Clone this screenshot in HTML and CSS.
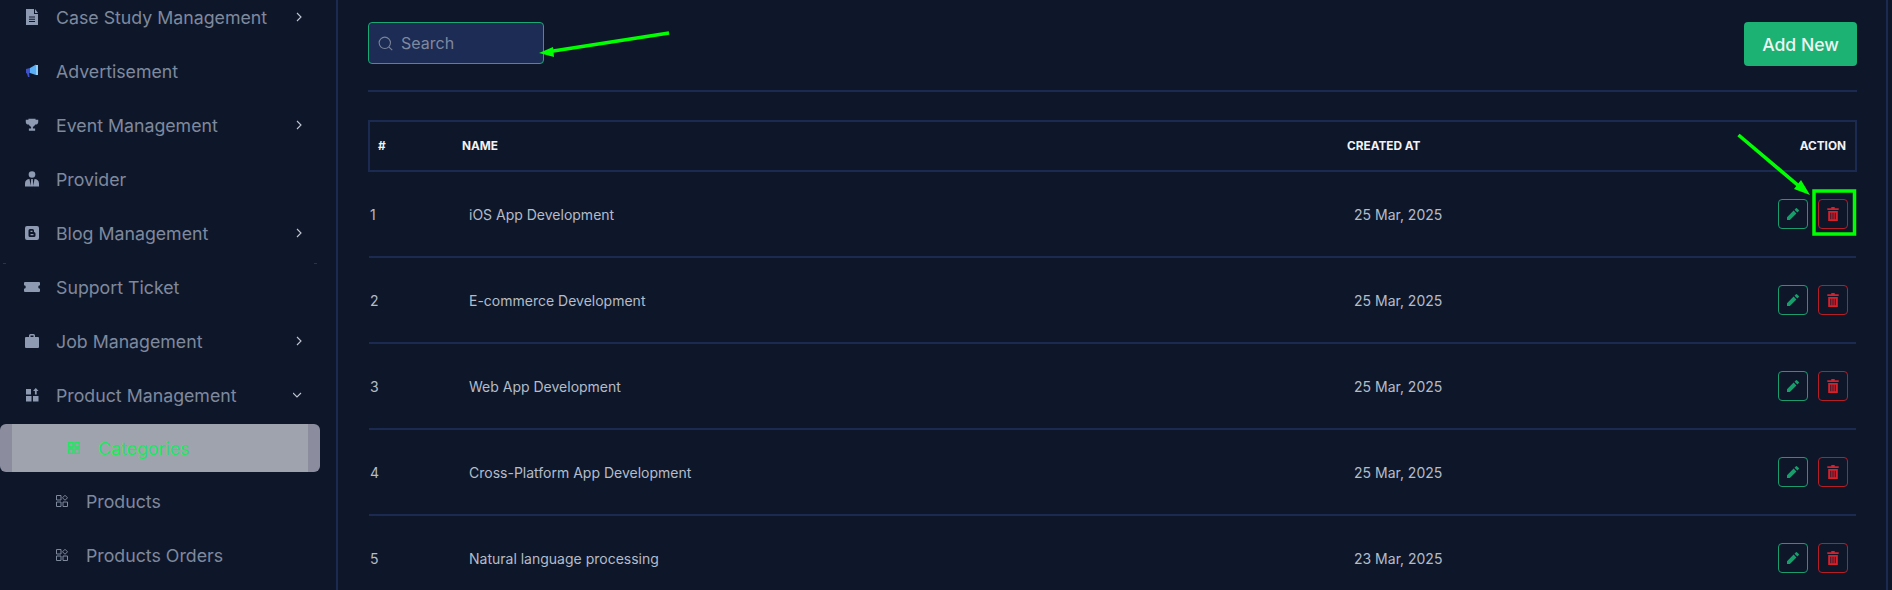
FILE: index.html
```html
<!DOCTYPE html>
<html lang="en">
<head>
<meta charset="utf-8">
<title>Categories</title>
<link rel="stylesheet" href="styles.css">
</head>
<body>
<div class="page">
  <aside class="sidebar">
    <ul class="nav">
      <li class="nav-item"><svg class="ico" viewBox="0 0 16 16"><path d="M2 0h8v5h4v11H2z M11 0l3 4h-3z M5 7.500v1h6v-1z M5 9.800v1h6v-1z M5 12v1h6v-1z" fill-rule="evenodd"/></svg><span class="label">Case Study Management</span><svg class="chev" viewBox="0 0 10 10"><path d="M4 1l4 4-4 4"/></svg></li>
      <li class="nav-item"><svg class="ico" viewBox="0 0 16 16"><path fill="#3f51c9" d="M2 6l4-1v5l-1 .2L5.500 14H4L3 10.500 2 10z"/><path fill="#5aaef5" d="M6 5l6-3.500V12L6 10z"/><path fill="#8fd0fb" d="M12 2h2v10h-2z"/></svg><span class="label">Advertisement</span></li>
      <li class="nav-item"><svg class="ico" viewBox="-1 -1 18 18"><path d="M4 1h8v1h3v2.500c0 1.800-1.300 2.900-3.300 3C11 9 10 9.700 9 9.900V12h2.500v2.500h-7V12H7V9.900C6 9.700 5 9 4.300 7.500 2.300 7.400 1 6.300 1 4.500V2h3z"/></svg><span class="label">Event Management</span><svg class="chev" viewBox="0 0 10 10"><path d="M4 1l4 4-4 4"/></svg></li>
      <li class="nav-item"><svg class="ico" viewBox="0 0 16 16"><circle cx="8" cy="3.500" r="3.300"/><path d="M1 15.500v-3C1 9.500 3 8 5.500 8L6.800 15.500zM15 15.500v-3C15 9.500 13 8 10.500 8L9.200 15.500zM7.200 8h1.600l.6 7.500H6.600z"/></svg><span class="label">Provider</span></li>
      <li class="nav-item"><svg class="ico" viewBox="0 0 16 16"><path fill-rule="evenodd" d="M3 1h10a2 2 0 0 1 2 2v10a2 2 0 0 1-2 2H3a2 2 0 0 1-2-2V3a2 2 0 0 1 2-2zM6 4a1.500 1.500 0 0 0-1.500 1.500v5A1.500 1.500 0 0 0 6 12h4a1.500 1.500 0 0 0 1.500-1.500V8.500A1.500 1.500 0 0 0 10 7V5.500A1.500 1.500 0 0 0 8.500 4zM6.500 5.800h2v1.100h-2zM6.500 9h3v1.200h-3z"/></svg><span class="label">Blog Management</span><svg class="chev" viewBox="0 0 10 10"><path d="M4 1l4 4-4 4"/></svg></li>
      <li class="nav-item"><svg class="ico ico-wide" viewBox="0 0 16 12"><path d="M1 1h14a1 1 0 0 1 1 1v2.200a1.800 1.800 0 0 0 0 3.600V10a1 1 0 0 1-1 1H1a1 1 0 0 1-1-1V7.800a1.800 1.800 0 0 0 0-3.600V2a1 1 0 0 1 1-1z"/></svg><span class="label">Support Ticket</span></li>
      <li class="nav-item"><svg class="ico" viewBox="0 0 16 16"><path d="M5 4V2.500A1.500 1.500 0 0 1 6.500 1h3A1.500 1.500 0 0 1 11 2.500V4h3a1 1 0 0 1 1 1v9a1 1 0 0 1-1 1H2a1 1 0 0 1-1-1V5a1 1 0 0 1 1-1zM6.500 2.500V4h3V2.500z" fill-rule="evenodd"/></svg><span class="label">Job Management</span><svg class="chev" viewBox="0 0 10 10"><path d="M4 1l4 4-4 4"/></svg></li>
      <li class="nav-item"><svg class="ico" viewBox="0 0 16 16"><path d="M2 2h5v5.500H2zM2 9h5.500v5.500H2zM9 9h5.500v5.500H9zM11.800 1l2.700 3h-1.800v3.500h-1.800V4H9z"/></svg><span class="label">Product Management</span><svg class="chev" viewBox="0 0 10 10"><path d="M0 3l4 4 4-4"/></svg></li>
      <li class="nav-item sub active"><svg class="ico-sub" viewBox="0 0 12 12"><path d="M.7.700h4.300v4.300H.7zM7 .700h4.300v4.300H7zM.7 7h4.300v4.300H.7zM7 7h4.300v4.300H7z"/></svg><span class="label">Categories</span></li>
      <li class="nav-item sub"><svg class="ico-sub" viewBox="0 0 12 12"><path d="M.5.500h4.500v4.500H.5zM9 .300l2.500 2.500L9 5.300 6.500 2.800zM.5 7h4.500v4.500H.5zM7 7h4.500v4.500H7z"/></svg><span class="label">Products</span></li>
      <li class="nav-item sub"><svg class="ico-sub" viewBox="0 0 12 12"><path d="M.5.500h4.500v4.500H.5zM9 .300l2.500 2.500L9 5.300 6.500 2.800zM.5 7h4.500v4.500H.5zM7 7h4.500v4.500H7z"/></svg><span class="label">Products Orders</span></li>
    </ul>
  </aside>
  <main class="main">
    <div class="toolbar">
      <label class="search">
        <svg class="search-ico" viewBox="0 0 24 24"><circle cx="11" cy="11" r="8"/><path d="M17 17l4.500 4.500"/></svg>
        <span>Search</span>
      </label>
      <button class="add">Add New</button>
    </div>
    <table class="table">
      <colgroup><col class="c-num"><col class="c-name"><col class="c-date"><col></colgroup>
      <thead>
        <tr><th>#</th><th>NAME</th><th>CREATED AT</th><th class="right">ACTION</th></tr>
      </thead>
      <tbody>
        <tr><td>1</td><td>iOS App Development</td><td>25 Mar, 2025</td><td><div class="actions"><button class="btn edit"><svg viewBox="0 0 24 24"><path d="M12.900 6.858l4.242 4.243L7.242 21H3v-4.243l9.900-9.900zm1.414-1.414l2.121-2.122a1 1 0 0 1 1.414 0l2.829 2.829a1 1 0 0 1 0 1.414l-2.122 2.121-4.242-4.242z"/></svg></button><button class="btn del"><svg viewBox="0 0 16 16"><path fill-rule="evenodd" d="M6 0h4v1.500h4.500V3.500h-13V1.500H6zM2.500 4.500h11V16h-11zM5 6.500V14h1V6.500zM7.500 6.500V14h1V6.500zM10 6.500V14h1V6.500z"/></svg></button></div></td></tr>
        <tr><td>2</td><td>E-commerce Development</td><td>25 Mar, 2025</td><td><div class="actions"><button class="btn edit"><svg viewBox="0 0 24 24"><path d="M12.900 6.858l4.242 4.243L7.242 21H3v-4.243l9.900-9.900zm1.414-1.414l2.121-2.122a1 1 0 0 1 1.414 0l2.829 2.829a1 1 0 0 1 0 1.414l-2.122 2.121-4.242-4.242z"/></svg></button><button class="btn del"><svg viewBox="0 0 16 16"><path fill-rule="evenodd" d="M6 0h4v1.500h4.500V3.500h-13V1.500H6zM2.500 4.500h11V16h-11zM5 6.500V14h1V6.500zM7.500 6.500V14h1V6.500zM10 6.500V14h1V6.500z"/></svg></button></div></td></tr>
        <tr><td>3</td><td>Web App Development</td><td>25 Mar, 2025</td><td><div class="actions"><button class="btn edit"><svg viewBox="0 0 24 24"><path d="M12.900 6.858l4.242 4.243L7.242 21H3v-4.243l9.900-9.900zm1.414-1.414l2.121-2.122a1 1 0 0 1 1.414 0l2.829 2.829a1 1 0 0 1 0 1.414l-2.122 2.121-4.242-4.242z"/></svg></button><button class="btn del"><svg viewBox="0 0 16 16"><path fill-rule="evenodd" d="M6 0h4v1.500h4.500V3.500h-13V1.500H6zM2.500 4.500h11V16h-11zM5 6.500V14h1V6.500zM7.500 6.500V14h1V6.500zM10 6.500V14h1V6.500z"/></svg></button></div></td></tr>
        <tr><td>4</td><td>Cross-Platform App Development</td><td>25 Mar, 2025</td><td><div class="actions"><button class="btn edit"><svg viewBox="0 0 24 24"><path d="M12.900 6.858l4.242 4.243L7.242 21H3v-4.243l9.900-9.900zm1.414-1.414l2.121-2.122a1 1 0 0 1 1.414 0l2.829 2.829a1 1 0 0 1 0 1.414l-2.122 2.121-4.242-4.242z"/></svg></button><button class="btn del"><svg viewBox="0 0 16 16"><path fill-rule="evenodd" d="M6 0h4v1.500h4.500V3.500h-13V1.500H6zM2.500 4.500h11V16h-11zM5 6.500V14h1V6.500zM7.500 6.500V14h1V6.500zM10 6.500V14h1V6.500z"/></svg></button></div></td></tr>
        <tr><td>5</td><td>Natural language processing</td><td>23 Mar, 2025</td><td><div class="actions"><button class="btn edit"><svg viewBox="0 0 24 24"><path d="M12.900 6.858l4.242 4.243L7.242 21H3v-4.243l9.900-9.900zm1.414-1.414l2.121-2.122a1 1 0 0 1 1.414 0l2.829 2.829a1 1 0 0 1 0 1.414l-2.122 2.121-4.242-4.242z"/></svg></button><button class="btn del"><svg viewBox="0 0 16 16"><path fill-rule="evenodd" d="M6 0h4v1.500h4.500V3.500h-13V1.500H6zM2.500 4.500h11V16h-11zM5 6.500V14h1V6.500zM7.500 6.500V14h1V6.500zM10 6.500V14h1V6.500z"/></svg></button></div></td></tr>
      </tbody>
    </table>
  </main>
  <svg class="marks" viewBox="0 0 1892 590">
    <rect class="mark-dash" x="3" y="263" width="3" height="1"/>
    <rect class="mark-dash" x="314" y="263" width="3" height="1"/>
    <path class="mark-line" d="M669 33L550 51.500"/>
    <path class="mark-head" d="M539 53l14-6 1 10z"/>
    <path class="mark-line" d="M1738.500 135L1800 187"/>
    <path class="mark-head" d="M1810 195l-16-6 7-9z"/>
    <rect class="mark-box" x="1814" y="191" width="40.500" height="43"/>
  </svg>
</div>
</body>
</html>
```
FILE: styles.css
```css
* { box-sizing: border-box; }
html, body { margin: 0; height: 100%; }
body {
  background: #0e172a;
  font-family: Inter, "Liberation Sans", sans-serif;
  overflow: hidden;
}
.page {
  position: relative;
  display: flex;
  width: 1892px;
  height: 590px;
  overflow: hidden;
}
.sidebar {
  width: 338px;
  flex: none;
  border-right: 2px solid #1c2a52;
}
.nav {
  list-style: none;
  margin: -10px 0 0;
  padding: 0;
}
.nav-item {
  display: flex;
  align-items: center;
  height: 54px;
  padding-left: 24px;
  padding-right: 17px;
  width: 320px;
  color: #7f899d;
  font-size: 17.750px;
  fill: #8e99b2;
}
.ico { width: 16px; height: 16px; flex: none; margin-right: 16px; }
.ico-wide { height: 12px; }
.label { flex: 1; white-space: nowrap; }
.chev {
  width: 10px;
  height: 10px;
  flex: none;
  fill: none;
  stroke: #c0c6d2;
  stroke-width: 1.100;
}
.sub { padding-left: 56px; }
.ico-sub {
  width: 12px;
  height: 12px;
  flex: none;
  margin-right: 18px;
  fill: none;
  stroke: #7f899d;
  stroke-width: 1;
}
.active {
  height: 48px;
  margin: 2px 0;
  padding-left: 68px;
  color: #1fe85f;
  background: linear-gradient(to right, #8b8d9f 12px, #9ea3ae 12px, #9ea3ae 308px, #8b8d9f 308px);
  border-radius: 6px;
}
.active .ico-sub { stroke: #1fe85f; stroke-width: 1.300; }
.main {
  flex: none;
  width: 1550px;
  height: 590px;
  padding: 22px 29px 0 30px;
  border-right: 2px solid #1c2a52;
  margin-right: 4px;
}
.toolbar {
  display: flex;
  justify-content: space-between;
  align-items: flex-start;
  height: 70px;
  border-bottom: 2px solid #1c2a52;
  margin-bottom: 28px;
}
.search {
  display: flex;
  align-items: center;
  width: 176px;
  height: 42px;
  padding-left: 8px;
  background: #1c2c55;
  border: 1px solid #1aa873;
  border-radius: 4px;
  color: #7f899e;
  font-size: 16px;
}
.search-ico {
  width: 17px;
  height: 17px;
  margin-right: 7px;
  fill: none;
  stroke: #7a8498;
  stroke-width: 1.500;
}
.add {
  width: 113px;
  height: 44px;
  background: #1bb273;
  border: 0;
  border-radius: 4px;
  color: #eef4f2;
  font: 500 17.600px Inter, "Liberation Sans", sans-serif;
}
.table {
  width: 1489px;
  table-layout: fixed;
  border-collapse: collapse;
}
.c-num { width: 85px; }
.c-name { width: 885px; }
.c-date { width: 300px; }
th {
  height: 50px;
  padding: 0 8px;
  border-top: 2px solid #1c2a52;
  border-bottom: 2px solid #1c2a52;
  color: #f0f2f6;
  font-size: 11.800px;
  font-weight: 700;
  text-align: left;
}
th:first-child { border-left: 2px solid #1c2a52; }
th:last-child { border-right: 2px solid #1c2a52; }
th.right { text-align: right; padding-right: 9px; }
td {
  height: 86px;
  padding: 0 15px;
  border-bottom: 2px solid #1c2a52;
  color: #b4bcc9;
  font-size: 14px;
}
td:first-child { padding-left: 1px; }
td:last-child { padding: 0 8px 0 0; }
.actions { display: flex; justify-content: flex-end; gap: 10px; }
.btn {
  display: flex;
  align-items: center;
  justify-content: center;
  width: 30px;
  height: 30px;
  padding: 0;
  background: transparent;
  border: 1px solid;
  border-radius: 4px;
}
.btn svg { width: 16px; height: 16px; }
.edit { border-color: #1c9c6c; fill: #1c9c6c; }
.del { border-color: #b51d27; fill: #d4212c; }
.del svg { width: 14px; height: 14px; }
.marks {
  position: absolute;
  left: 0;
  top: 0;
  width: 1892px;
  height: 590px;
  pointer-events: none;
}
.mark-dash { fill: #2a3448; }
.mark-line { stroke: #00ff00; stroke-width: 3.500; fill: none; }
.mark-head { fill: #00ff00; }
.mark-box { stroke: #00ff00; stroke-width: 3.500; fill: none; }
```
